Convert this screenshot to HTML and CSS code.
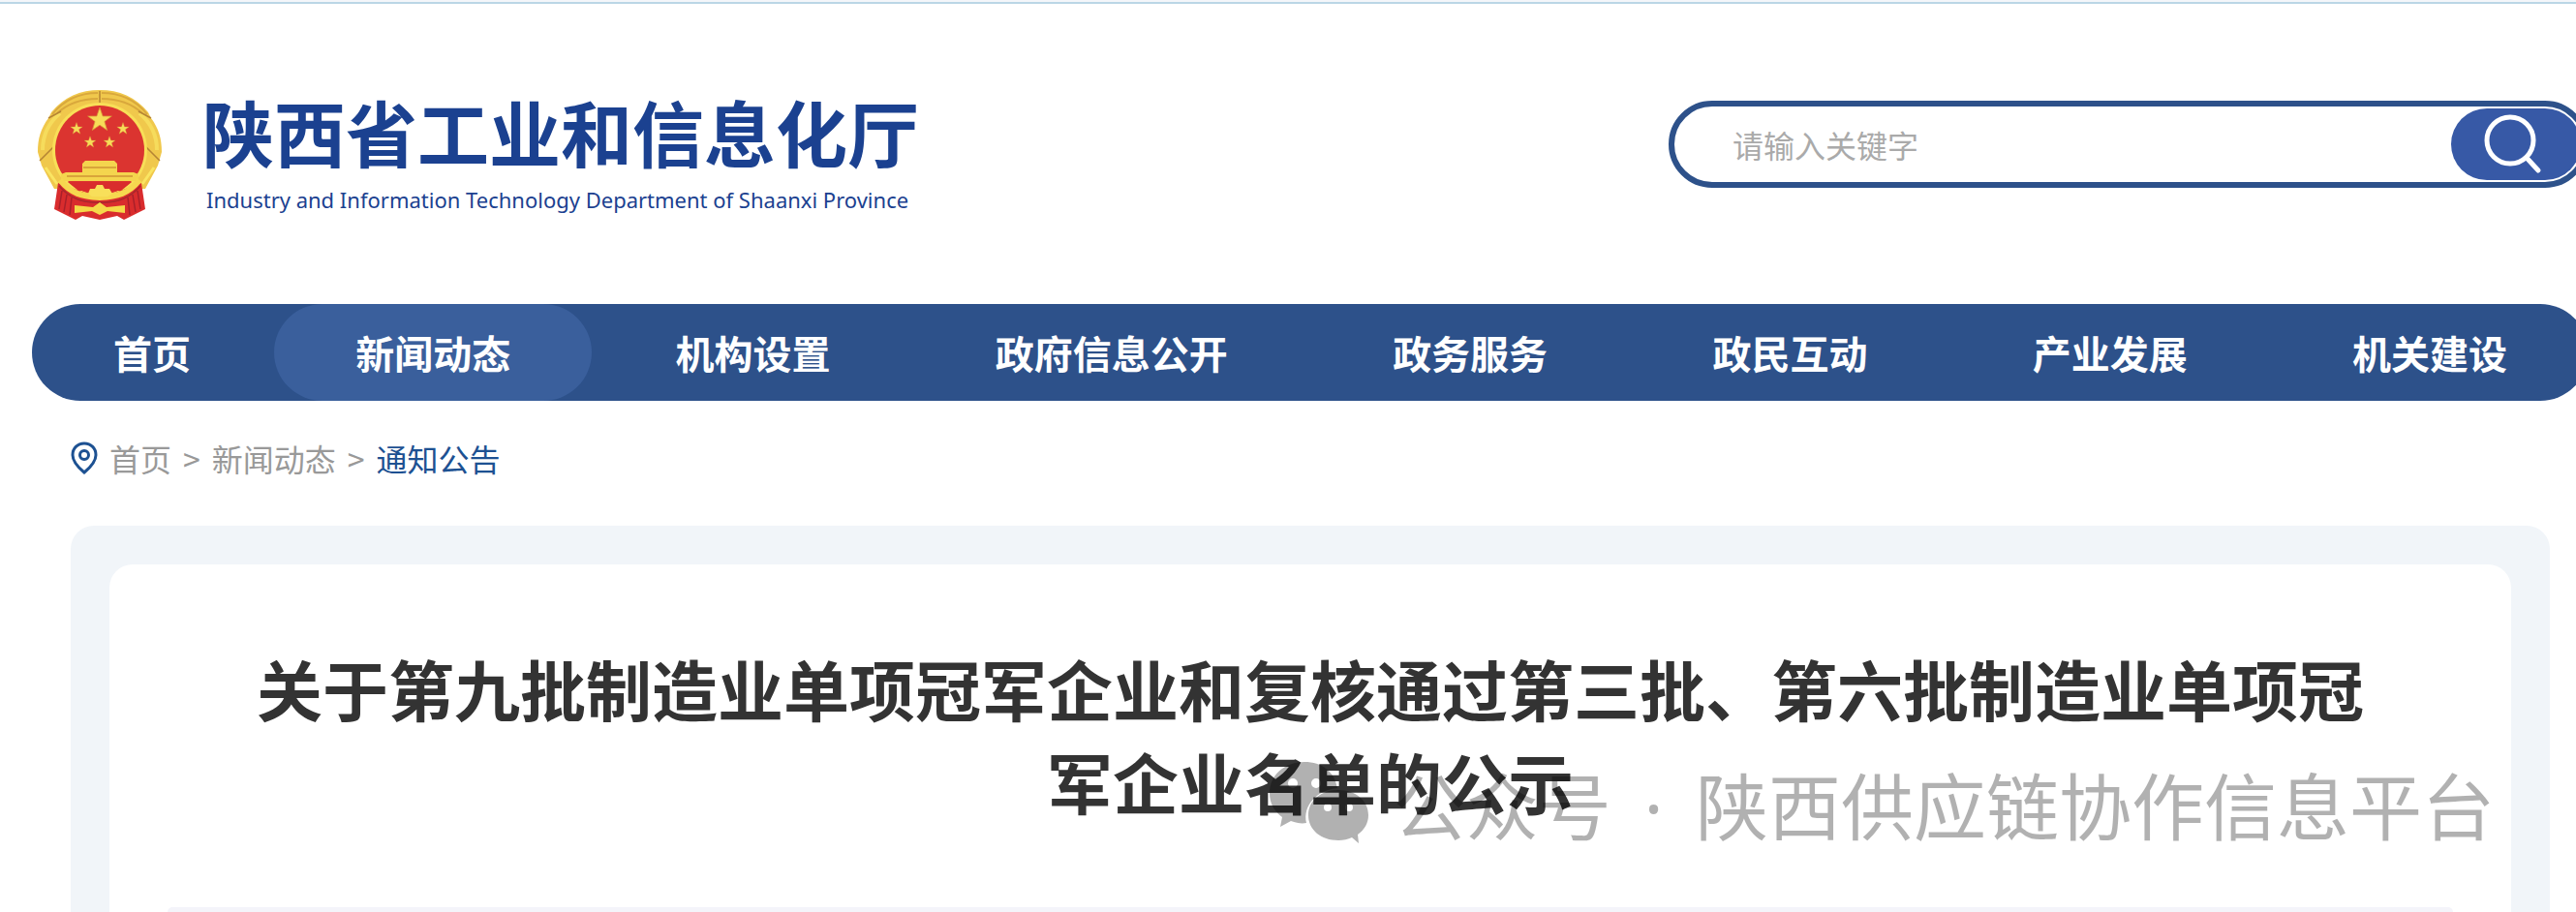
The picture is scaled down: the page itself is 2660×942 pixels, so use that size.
FILE: index.html
```html
<!DOCTYPE html>
<html lang="zh-CN">
<head>
<meta charset="utf-8">
<meta name="viewport" content="width=device-width, initial-scale=1">
<title>陕西省工业和信息化厅</title>
<link rel="stylesheet" href="styles.css">
</head>
<body>
<header class="header">
  <a class="brand" href="#">
    <svg class="emblem" viewBox="0 0 128 138" aria-hidden="true">
      <defs>
        <path id="star" d="M0-10 2.4-3.1 9.5-3.1 3.8 1.2 5.9 8.1 0 4 -5.9 8.1 -3.8 1.2 -9.5-3.1 -2.4-3.1Z"/>
      </defs>
      <path d="M64 4C44 4 27 11 14 27L11 33C3 44 0 54 0 68L4 82 17 106H111L124 82 128 68C128 54 125 44 117 33L114 27C101 11 84 4 64 4Z" fill="#f0c84c"/>
      <path d="M15 29C27 14 44 7 62 7M113 29C101 14 84 7 66 7M20 28C32 17 46 13 62 13M108 28C96 17 82 13 66 13" fill="none" stroke="#d9a83c" stroke-width="2"/>
      <path d="M5 66C5 52 11 38 23 28M123 66C123 52 117 38 105 28" fill="none" stroke="#f6dc5c" stroke-width="4"/>
      <path d="M2 77 17 62M126 77 111 62M11 33 24 26M117 33 104 26M64 5V18" stroke="#b58434" stroke-width="1.5"/>
      <path d="M8 84 20 101M120 84 108 101" stroke="#fae562" stroke-width="3"/>
      <circle cx="64" cy="66" r="49" fill="#f8df58"/>
      <circle cx="64" cy="66" r="46" fill="#db3430"/>
      <g fill="#f7dc58" stroke="#d89338" stroke-width=".6">
        <use href="#star" transform="translate(64 35) scale(1.3)"/>
        <use href="#star" transform="translate(40 44) scale(.65)"/>
        <use href="#star" transform="translate(88 44) scale(.65)"/>
        <use href="#star" transform="translate(54 58) scale(.62)"/>
        <use href="#star" transform="translate(74 58) scale(.62)"/>
      </g>
      <path d="M21 100 17 127 39 138 46 134 64 138 82 134 89 138 111 127 107 100 64 116Z" fill="#d92c2d"/>
      <path d="M49 77H79L82 80V89H99L104 91V98H24V91L29 89H46V80Z" fill="#f4d54e"/>
      <path d="M47 84H81M30 93H98" stroke="#d9a53a" stroke-width="2"/>
      <path d="M23 97C34 111 46 114 64 115C82 114 94 111 105 97" fill="none" stroke="#f6d84f" stroke-width="6"/>
      <path d="M31 99H97L86 108H42Z" fill="#d92c2d"/>
      <path d="M52 111 54 106 59 106 61 102H67L69 106 74 106 77 111 72 114H56Z" fill="#f8df5a"/>
      <path d="M22 103C34 117 48 121 64 120C80 121 94 117 106 103" fill="none" stroke="#a8272c" stroke-width="1.5"/>
      <path d="M38 123 57 125 64 120 71 125 90 123V131L72 129 64 133 56 129 38 131Z" fill="#f5d949"/>
      <path d="M25 108 22 127M30 112 27 130M35 115 33 133M103 108 106 127M98 112 101 130M93 115 95 133" stroke="#a8202a" stroke-width="1.5"/>
    </svg>
    <span class="brand-text">
      <span class="brand-name">陕西省工业和信息化厅</span>
      <span class="brand-en" lang="en">Industry and Information Technology Department of Shaanxi Province</span>
    </span>
  </a>
  <form class="search" role="search">
    <input class="search-input" type="text" aria-label="关键字" placeholder="请输入关键字">
    <button class="search-button" type="button" aria-label="搜索">
      <svg class="search-icon" viewBox="0 0 64 64" aria-hidden="true"><circle cx="29" cy="28" r="24"/><path d="M46 46 58 59"/></svg>
    </button>
  </form>
</header>
<nav class="nav" aria-label="主导航">
  <a class="nav-link" href="#">首页</a>
  <a class="nav-link nav-link-active" href="#">新闻动态</a>
  <a class="nav-link" href="#">机构设置</a>
  <a class="nav-link" href="#">政府信息公开</a>
  <a class="nav-link" href="#">政务服务</a>
  <a class="nav-link" href="#">政民互动</a>
  <a class="nav-link" href="#">产业发展</a>
  <a class="nav-link" href="#">机关建设</a>
</nav>
<div class="crumbs">
  <svg class="pin" viewBox="0 0 28 34" aria-hidden="true"><path d="M14 2C7 2 2 7 2 14C2 21 8 27 14 32C20 27 26 21 26 14C26 7 21 2 14 2Z"/><circle cx="14" cy="14" r="4.5"/></svg>
  <a class="crumb" href="#">首页</a>
  <span>&gt;</span>
  <a class="crumb" href="#">新闻动态</a>
  <span>&gt;</span>
  <a class="crumb crumb-current" href="#">通知公告</a>
</div>
<main class="panel">
  <article class="article">
    <h1 class="title">关于第九批制造业单项冠军企业和复核通过第三批、第六批制造业单项冠军企业名单的公示</h1>
    <div class="meta"></div>
  </article>
</main>
<div class="watermark">
  <svg class="wechat" viewBox="0 0 106 88" aria-hidden="true">
    <path fill-rule="evenodd" d="M38 2C17 2 2 16 2 34C2 45 7 53 15 59L13 69 24 63C30 65 35 66 40 65C36 47 51 31 72 29C69 12 56 2 38 2ZM26 19a5 5 0 1 1 0 10a5 5 0 1 1 0-10ZM50 19a5 5 0 1 1 0 10a5 5 0 1 1 0-10Z"/>
    <path fill-rule="evenodd" d="M73 31C55 31 42 42 42 57C42 72 55 83 73 83C78 83 83 82 87 80L94 86 93 77C100 72 104 65 104 57C104 42 91 31 73 31ZM62 45a4 4 0 1 1 0 8a4 4 0 1 1 0-8ZM84 45a4 4 0 1 1 0 8a4 4 0 1 1 0-8Z"/>
  </svg>
  <span>公众号<span class="dot"> · </span>陕西供应链协作信息平台</span>
</div>
</body>
</html>
```
FILE: styles.css
```css
* {
  box-sizing: border-box;
}

body {
  margin: 0;
  min-height: 100vh;
  position: relative;
  display: flex;
  flex-direction: column;
  overflow: hidden;
  border-top: 2px solid #f4f6fa;
  box-shadow: inset 0 2px #bbd6e6;
  background: #fff;
  color: #333;
  font-family: "Noto Sans CJK SC", sans-serif;
}

a {
  color: inherit;
  text-decoration: none;
}

.header {
  display: flex;
  justify-content: space-between;
  align-items: flex-start;
  margin: 0 -13px 0 39px;
  padding-top: 87px;
}

.brand {
  display: flex;
  gap: 42px;
  color: #1b4190;
}

.emblem {
  width: 128px;
  height: 138px;
}

.brand-text {
  display: flex;
  flex-direction: column;
  gap: 9px;
  padding-top: 4px;
}

.brand-name {
  font-size: 74px;
  font-weight: 700;
  line-height: 84px;
}

.brand-en {
  padding-left: 4px;
  font-family: "Noto Sans", sans-serif;
  font-size: 22px;
  line-height: 40px;
}

.search {
  display: flex;
  align-items: center;
  width: 950px;
  height: 90px;
  margin-top: 15px;
  padding: 2px;
  border: 6px solid #2d518a;
  border-radius: 45px;
}

.search-input {
  flex: 1;
  min-width: 0;
  padding: 0 0 0 58px;
  border: 0;
  outline: 0;
  background: none;
  font: 32px "Noto Sans CJK SC", sans-serif;
}

.search-input::placeholder {
  color: #aaa;
}

.search-button {
  width: 134px;
  height: 74px;
  padding: 0 0 0 32px;
  border: 0;
  border-radius: 37px;
  background: #3759a6;
  text-align: left;
}

.search-icon {
  display: block;
  width: 64px;
  height: 64px;
  fill: none;
  stroke: #fff;
  stroke-width: 5;
  stroke-linecap: round;
}

.nav {
  display: flex;
  justify-content: space-between;
  margin: 87px -13px 0 33px;
  border-radius: 50px;
  background: #2d518a;
}

.nav-link {
  padding: 0 84px;
  border-radius: 50px;
  color: #fff;
  font-size: 40px;
  font-weight: 700;
  line-height: 100px;
  white-space: nowrap;
}

.nav-link-active {
  background: #3a5f9c;
}

.crumbs {
  display: flex;
  align-items: center;
  gap: 12px;
  margin: 35px 73px 0;
  color: #999;
  font-size: 32px;
  line-height: 48px;
}

.pin {
  width: 28px;
  height: 34px;
  fill: none;
  stroke: #1d5192;
  stroke-width: 3;
}

.crumb-current {
  color: #1d5192;
}

.panel {
  flex: 1;
  display: flex;
  margin: 46px 27px 0 73px;
  padding: 40px 40px 0;
  border-radius: 24px 24px 0 0;
  background: #f1f5f9;
}

.article {
  flex: 1;
  display: flex;
  flex-direction: column;
  padding: 80px 60px 0;
  border-radius: 24px 24px 0 0;
  background: #fff;
}

.title {
  margin: 0;
  padding: 0 60px;
  font-size: 68px;
  font-weight: 700;
  line-height: 96px;
  text-align: center;
}

.meta {
  flex: 1;
  margin-top: 82px;
  border-radius: 12px 12px 0 0;
  background: #f4f4fa;
}

.watermark {
  position: absolute;
  right: 84px;
  bottom: 61px;
  display: flex;
  align-items: center;
  gap: 24px;
  color: #000;
  font-size: 75px;
  line-height: 96px;
  white-space: nowrap;
  opacity: .3;
}

.dot {
  margin: 0 14px;
  font-family: "Noto Sans", sans-serif;
}

.wechat {
  width: 106px;
  height: 88px;
  margin-bottom: 6px;
}
```
